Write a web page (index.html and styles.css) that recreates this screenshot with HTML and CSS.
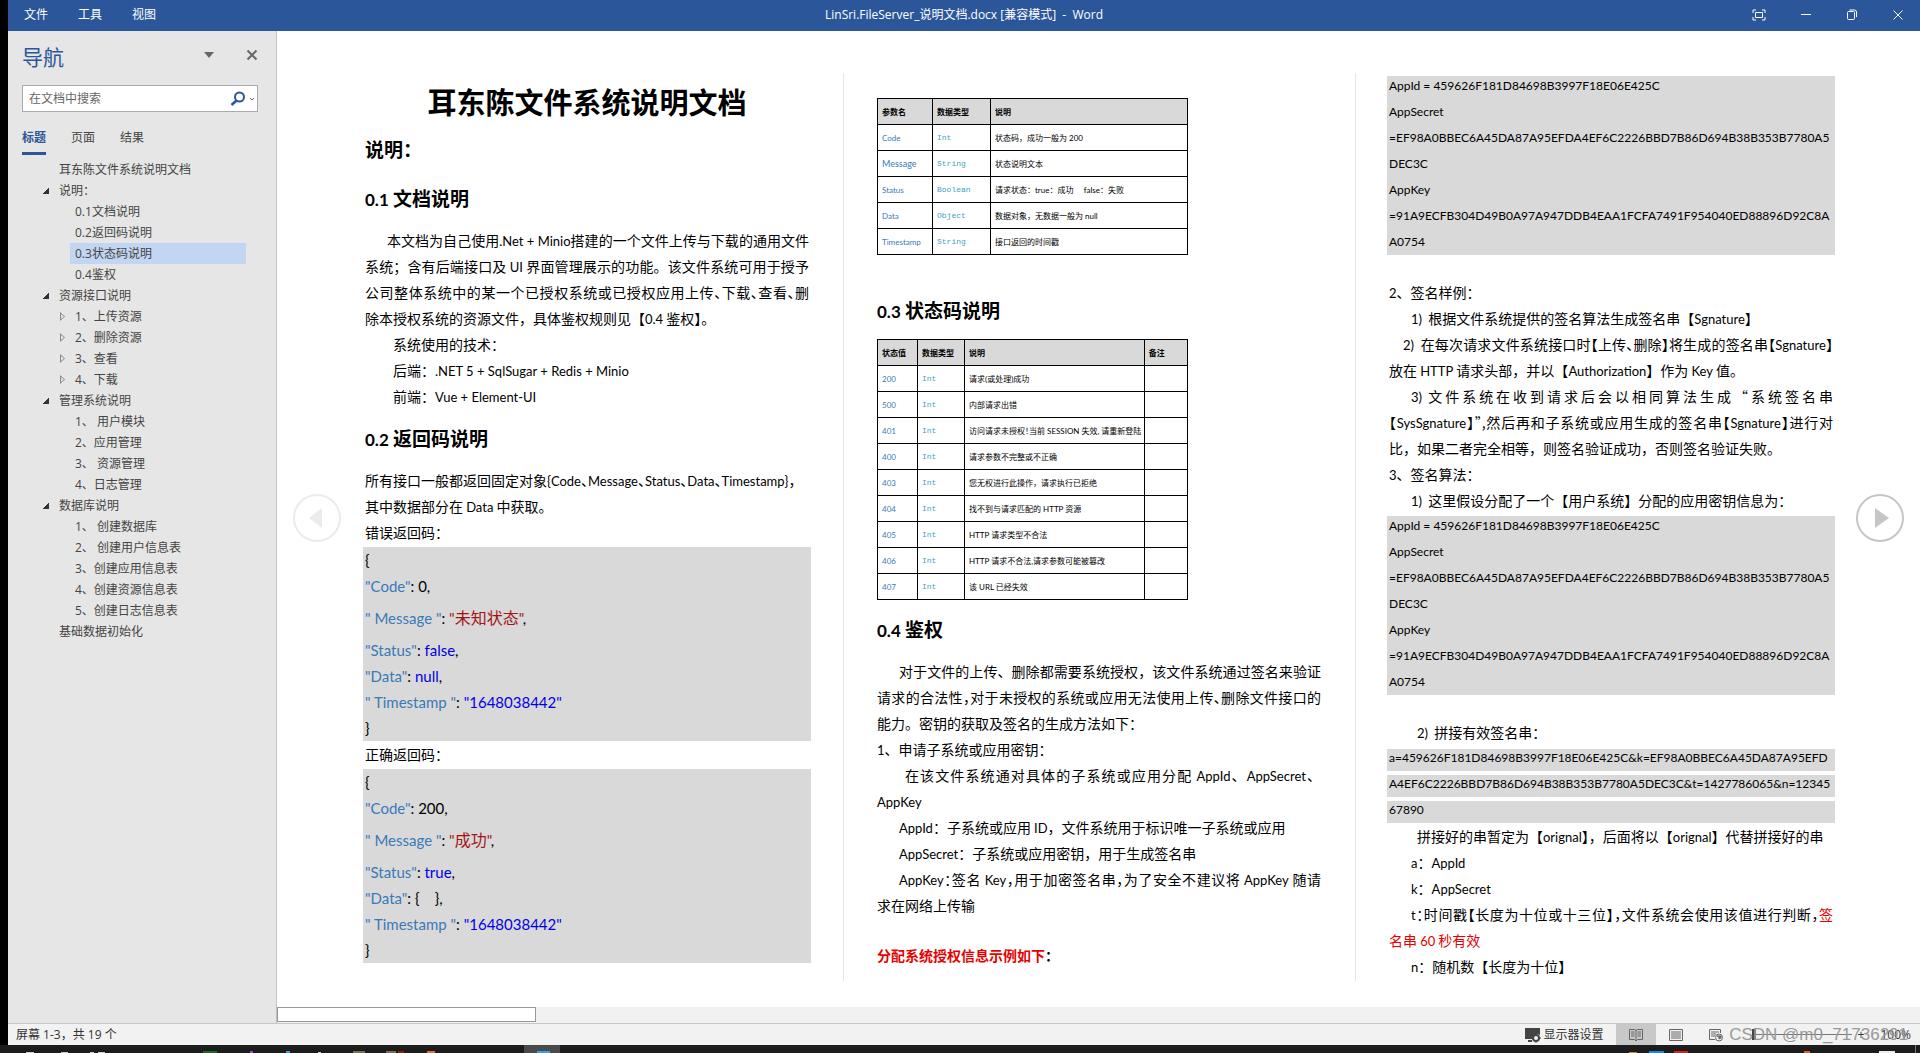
FILE: index.html
```html
<!DOCTYPE html>
<html lang="zh-CN">
<head>
<meta charset="utf-8">
<title>LinSri.FileServer_说明文档.docx - Word</title>
<link rel="stylesheet" href="styles.css">
</head>
<body>
<div class="window">
  <header class="titlebar">
    <nav class="menu">
      <button type="button">文件</button>
      <button type="button">工具</button>
      <button type="button">视图</button>
    </nav>
    <div class="doc-name">LinSri.FileServer_说明文档.docx [兼容模式] &nbsp;-&nbsp; Word</div>
    <div class="controls">
      <button type="button" aria-label="全屏"><svg width="14" height="12" viewBox="0 0 14 12"><path d="M1 4V1h3M10 1h3v3M13 8v3h-3M4 11H1V8M3.500 3.500h7v5h-7z"/></svg></button>
      <button type="button" aria-label="最小化"><svg width="12" height="12" viewBox="0 0 12 12"><path d="M1 5.500h10"/></svg></button>
      <button type="button" aria-label="还原"><svg width="12" height="12" viewBox="0 0 12 12"><path d="M1.500 3.500q0-1 1-1h5q1 0 1 1v6q0 1-1 1h-5q-1 0-1-1zM3.500 1h5q2 0 2 2v5"/></svg></button>
      <button type="button" aria-label="关闭"><svg width="12" height="12" viewBox="0 0 12 12"><path d="M1.500 1.500l9 9M10.500 1.500l-9 9"/></svg></button>
    </div>
  </header>

  <main class="workspace">
    <aside class="pane">
      <div class="pane-head">
        <h2>导航</h2>
        <button type="button" aria-label="窗格选项"><svg width="10" height="6" viewBox="0 0 10 6"><path d="M0 0h10L5 6z" fill="#666"/></svg></button>
        <button type="button" aria-label="关闭窗格"><svg width="12" height="12" viewBox="0 0 12 12"><path d="M1.500 1.500l9 9M10.500 1.500l-9 9" stroke="#666" stroke-width="2" fill="none"/></svg></button>
      </div>
      <div class="search">
        <input type="text" placeholder="在文档中搜索" aria-label="在文档中搜索">
        <svg width="26" height="16" viewBox="0 0 26 16" fill="none"><circle cx="9.500" cy="6" r="4.500" stroke="#2b579a" stroke-width="2"/><path d="M6.500 9.500L1.500 14" stroke="#2b579a" stroke-width="2.500"/><path d="M20 7l2 2 2-2" stroke="#666"/></svg>
      </div>
      <div class="tabs">
        <button type="button" class="active">标题</button>
        <button type="button">页面</button>
        <button type="button">结果</button>
      </div>
      <ul class="tree">
        <li>耳东陈文件系统说明文档</li>
        <li class="open">说明：</li>
        <li class="sub">0.1文档说明</li>
        <li class="sub">0.2返回码说明</li>
        <li class="sub current">0.3状态码说明</li>
        <li class="sub">0.4鉴权</li>
        <li class="open">资源接口说明</li>
        <li class="sub closed">1、上传资源</li>
        <li class="sub closed">2、删除资源</li>
        <li class="sub closed">3、查看</li>
        <li class="sub closed">4、下载</li>
        <li class="open">管理系统说明</li>
        <li class="sub">1、 用户模块</li>
        <li class="sub">2、应用管理</li>
        <li class="sub">3、 资源管理</li>
        <li class="sub">4、日志管理</li>
        <li class="open">数据库说明</li>
        <li class="sub">1、 创建数据库</li>
        <li class="sub">2、 创建用户信息表</li>
        <li class="sub">3、创建应用信息表</li>
        <li class="sub">4、创建资源信息表</li>
        <li class="sub">5、创建日志信息表</li>
        <li>基础数据初始化</li>
      </ul>
    </aside>

    <section class="reader">
      <div class="pages">
        <article class="page">
          <h1>耳东陈文件系统说明文档</h1>
          <h2 class="lead">说明：</h2>
          <h3><span class="en">0.1</span> 文档说明</h3>
          <p>
            <span class="fill in-m">本文档为自己使用<span class="en">.Net + Minio</span>搭建的一个文件上传与下载的通用文件</span>
            <span class="fill">系统；含有后端接口及 <span class="en">UI</span> 界面管理展示的功能。该文件系统可用于授予</span>
            <span class="fill half">公司整体系统中的某一个已授权系统或已授权应用上传、下载、查看、删</span>
            <span class="row">除本授权系统的资源文件，具体鉴权规则见【<span class="en">0.4</span> 鉴权】。</span>
          </p>
          <p class="in-l">系统使用的技术：</p>
          <p class="in-l">后端：<span class="en">.NET 5 + SqlSugar + Redis + Minio</span></p>
          <p class="in-l">前端：<span class="en">Vue + Element-UI</span></p>
          <h3><span class="en">0.2</span> 返回码说明</h3>
          <p>
            <span class="row half">所有接口一般都返回固定对象<span class="en">{Code</span>、<span class="en">Message</span>、<span class="en">Status</span>、<span class="en">Data</span>、<span class="en">Timestamp}</span>，</span>
            <span class="row">其中数据部分在 <span class="en">Data</span> 中获取。</span>
          </p>
          <p>错误返回码：</p>
          <div class="shade json">
            <p>{</p>
            <p><b>"Code"</b>: 0,</p>
            <p class="tall"><b>" Message "</b>: <i>"<span class="han">未知状态</span>"</i>,</p>
            <p><b>"Status"</b>: <em>false</em>,</p>
            <p><b>"Data"</b>: <em>null</em>,</p>
            <p><b>" Timestamp "</b>: <em>"1648038442"</em></p>
            <p>}</p>
          </div>
          <p>正确返回码：</p>
          <div class="shade json">
            <p>{</p>
            <p><b>"Code"</b>: 200,</p>
            <p class="tall"><b>" Message "</b>: <i>"<span class="han">成功</span>"</i>,</p>
            <p><b>"Status"</b>: <em>true</em>,</p>
            <p><b>"Data"</b>: {&nbsp;&nbsp;&nbsp; },</p>
            <p><b>" Timestamp "</b>: <em>"1648038442"</em></p>
            <p>}</p>
          </div>
        </article>

        <article class="page">
          <table class="params">
            <colgroup><col class="c-name"><col class="c-type"><col></colgroup>
            <thead><tr><th>参数名</th><th>数据类型</th><th>说明</th></tr></thead>
            <tbody>
              <tr><td>Code</td><td>Int</td><td>状态码，成功一般为 200</td></tr>
              <tr><td class="big">Message</td><td>String</td><td>状态说明文本</td></tr>
              <tr><td>Status</td><td>Boolean</td><td>请求状态：true：成功&nbsp;&nbsp;&nbsp;&nbsp; false：失败</td></tr>
              <tr><td>Data</td><td>Object</td><td>数据对象，无数据一般为 null</td></tr>
              <tr><td>Timestamp</td><td>String</td><td>接口返回的时间戳</td></tr>
            </tbody>
          </table>
          <h3><span class="en">0.3</span> 状态码说明</h3>
          <table>
            <colgroup><col class="c-code"><col class="c-kind"><col><col class="c-note"></colgroup>
            <thead><tr><th>状态值</th><th>数据类型</th><th>说明</th><th>备注</th></tr></thead>
            <tbody>
              <tr><td>200</td><td>Int</td><td>请求(或处理)成功</td><td></td></tr>
              <tr><td>500</td><td>Int</td><td>内部请求出错</td><td></td></tr>
              <tr><td>401</td><td>Int</td><td class="half">访问请求未授权！当前 SESSION 失效, 请重新登陆</td><td></td></tr>
              <tr><td>400</td><td>Int</td><td>请求参数不完整或不正确</td><td></td></tr>
              <tr><td>403</td><td>Int</td><td>您无权进行此操作，请求执行已拒绝</td><td></td></tr>
              <tr><td>404</td><td>Int</td><td>找不到与请求匹配的 HTTP 资源</td><td></td></tr>
              <tr><td>405</td><td>Int</td><td>HTTP 请求类型不合法</td><td></td></tr>
              <tr><td>406</td><td>Int</td><td>HTTP 请求不合法,请求参数可能被篡改</td><td></td></tr>
              <tr><td>407</td><td>Int</td><td>该 URL 已经失效</td><td></td></tr>
            </tbody>
          </table>
          <h3><span class="en">0.4</span> 鉴权</h3>
          <p>
            <span class="fill in-m">对于文件的上传、删除都需要系统授权，该文件系统通过签名来验证</span>
            <span class="fill half">请求的合法性，对于未授权的系统或应用无法使用上传、删除文件接口的</span>
            <span class="row">能力。密钥的获取及签名的生成方法如下：</span>
          </p>
          <p><span class="en">1</span>、申请子系统或应用密钥：</p>
          <p>
            <span class="fill in-l">在该文件系统通对具体的子系统或应用分配 <span class="en">AppId</span>、<span class="en">AppSecret</span>、</span>
            <span class="row"><span class="en">AppKey</span></span>
          </p>
          <p class="in-m"><span class="en">AppId</span>：子系统或应用 <span class="en">ID</span>，文件系统用于标识唯一子系统或应用</p>
          <p class="in-m"><span class="en">AppSecret</span>：子系统或应用密钥，用于生成签名串</p>
          <p>
            <span class="fill half in-m"><span class="en">AppKey</span>：签名 <span class="en">Key</span>，用于加密签名串，为了安全不建议将 <span class="en">AppKey</span> 随请</span>
            <span class="row">求在网络上传输</span>
          </p>
          <p class="spaced strong"><span class="red">分配系统授权信息示例如下</span>：</p>
        </article>

        <article class="page">
          <div class="shade keys">
            <p>AppId = 459626F181D84698B3997F18E06E425C</p>
            <p>AppSecret<br>=EF98A0BBEC6A45DA87A95EFDA4EF6C2226BBD7B86D694B38B353B7780A5<br>DEC3C</p>
            <p>AppKey<br>=91A9ECFB304D49B0A97A947DDB4EAA1FCFA7491F954040ED88896D92C8A<br>A0754</p>
          </div>
          <p class="spaced"><span class="en">2</span>、签名样例：</p>
          <p class="in-m"><span class="en">1)</span>&nbsp; 根据文件系统提供的签名算法生成签名串【<span class="en">Sgnature</span>】</p>
          <p>
            <span class="fill half in-s"><span class="en">2)</span>&nbsp; 在每次请求文件系统接口时【上传、删除】将生成的签名串【<span class="en">Sgnature</span>】</span>
            <span class="row">放在 <span class="en">HTTP</span> 请求头部，并以【<span class="en">Authorization</span>】作为 <span class="en">Key</span> 值。</span>
          </p>
          <p>
            <span class="fill in-m"><span class="en">3)</span> 文件系统在收到请求后会以相同算法生成“系统签名串</span>
            <span class="fill half">【<span class="en">SysSgnature</span>】”,然后再和子系统或应用生成的签名串【<span class="en">Sgnature</span>】进行对</span>
            <span class="row">比，如果二者完全相等，则签名验证成功，否则签名验证失败。</span>
          </p>
          <p><span class="en">3</span>、签名算法：</p>
          <p class="in-m"><span class="en">1)</span>&nbsp; 这里假设分配了一个【用户系统】分配的应用密钥信息为：</p>
          <div class="shade keys">
            <p>AppId = 459626F181D84698B3997F18E06E425C</p>
            <p>AppSecret<br>=EF98A0BBEC6A45DA87A95EFDA4EF6C2226BBD7B86D694B38B353B7780A5<br>DEC3C</p>
            <p>AppKey<br>=91A9ECFB304D49B0A97A947DDB4EAA1FCFA7491F954040ED88896D92C8A<br>A0754</p>
          </div>
          <p class="spaced in-l"><span class="en">2)</span>&nbsp; 拼接有效签名串：</p>
          <div class="shade striped">
            <p>a=459626F181D84698B3997F18E06E425C&amp;k=EF98A0BBEC6A45DA87A95EFD<br>A4EF6C2226BBD7B86D694B38B353B7780A5DEC3C&amp;t=1427786065&amp;n=12345<br>67890</p>
          </div>
          <p class="in-l">拼接好的串暂定为【<span class="en">orignal</span>】，后面将以【<span class="en">orignal</span>】代替拼接好的串</p>
          <p class="in-m"><span class="en">a</span>：<span class="en">AppId</span></p>
          <p class="in-m"><span class="en">k</span>：<span class="en">AppSecret</span></p>
          <p>
            <span class="fill half in-m"><span class="en">t</span>：时间戳【长度为十位或十三位】，文件系统会使用该值进行判断，<span class="red">签</span></span>
            <span class="row red">名串 <span class="en">60</span> 秒有效</span>
          </p>
          <p class="in-m"><span class="en">n</span>：随机数【长度为十位】</p>
        </article>
      </div>
      <button type="button" class="turn prev" aria-label="上一屏"><svg width="50" height="50" viewBox="0 0 50 50"><circle cx="25" cy="25" r="23"/><path d="M17 25l13-10v20z"/></svg></button>
      <button type="button" class="turn next" aria-label="下一屏"><svg width="50" height="50" viewBox="0 0 50 50"><circle cx="25" cy="25" r="23"/><path d="M34 25L20 15v20z"/></svg></button>
      <div class="scroll"><div class="thumb"></div></div>
    </section>
  </main>

  <footer class="status">
    <span class="count">屏幕 1-3，共 19 个</span>
    <button type="button" class="display"><svg width="16" height="16" viewBox="0 0 16 16"><path d="M0 1h15v7l-3-1-4 3-1 2H0zM3 13h4v2H3z" fill="#444"/><circle cx="11" cy="11" r="3" fill="none" stroke="#444" stroke-width="2"/><path d="M11 6v2M11 14v2M6 11h2M14 11h2M8 8l1 1M13 13l1 1M14 8l-1 1M8 14l1-1" stroke="#444"/></svg>显示器设置</button>
    <button type="button" class="view on" aria-label="阅读视图"><svg width="14" height="14" viewBox="0 0 14 14"><path d="M7 2.500L5.500 1.500h-5v10h5L7 13l1.500-1.500h5v-10h-5zM7 2v11M2 4h3.500M2 6h3.500M2 8h3.500M8.500 4H12M8.500 6H12M8.500 8H12"/></svg></button>
    <button type="button" class="view" aria-label="页面视图"><svg width="14" height="14" viewBox="0 0 14 14"><path d="M.5 1.500h13v11H.5zM2 4h10M2 6h10M2 8h10M2 10h10"/></svg></button>
    <button type="button" class="view" aria-label="Web 版式"><svg width="14" height="14" viewBox="0 0 14 14"><path d="M6 11.500H.5v-10h11V5M2 4h8M2 6h5M2 8h4"/><circle cx="10" cy="9.500" r="3.500"/><path d="M8 8l2 1v2l2-1V8z" fill="#666"/></svg></button>
    <div class="zoom">
      <input type="range" min="10" max="500" value="10" aria-label="显示比例">
      <span>+</span>
    </div>
    <span class="percent">100%</span>
    <span class="watermark">CSDN @m0_71736291</span>
  </footer>
</div>
<div class="taskbar">
  <svg width="580" height="8" viewBox="0 0 580 8"><path d="M524 0h36v8h-36z" fill="#4a4a4a"/><path d="M537 6h13v2h-13z" fill="#3aa0e8"/><path d="M26 7h8v1h-8zM61 7h7v1h-7zM90 7h4v1h-4zM98 7h7v1h-7zM318 7h3v1h-3z" fill="#ccc"/><path d="M203 6h14v2h-14z" fill="#1d6b22"/><path d="M250 6h3v2h-3z" fill="#8a4fe0"/><path d="M286 6h4v2h-4z" fill="#2aa7e8"/><path d="M353 6h12v2h-12zM386 6h10v2h-10z" fill="#777058"/><path d="M398 6h6v2h-6z" fill="#8a1d14"/><path d="M427 6h8v2h-8z" fill="#e86a3a"/></svg>
  <svg width="320" height="8" viewBox="0 0 320 8"><path d="M29 7h8v1h-8z" fill="#c28a2e"/><path d="M49 6h15v2H49z" fill="#1f86d8"/><path d="M74 6h14v2H74z" fill="#d8201f"/><path d="M204 6h6v2h-6z" fill="#e85a20"/><path d="M279 6h16v2h-16z" fill="#eee"/><path d="M315 0h1v8h-1z" fill="#777"/></svg>
</div>
</body>
</html>
```
FILE: styles.css
```css
* { box-sizing: border-box; }

body {
  margin: 0;
  min-height: 100vh;
  display: flex;
  flex-direction: column;
  background: #000;
  color: #000;
  font: 12px/20px "Open Sans", "Noto Sans CJK SC", sans-serif;
}

h1, h2, h3, p, ul { margin: 0; padding: 0; }
button { margin: 0; padding: 0; border: 0; background: none; color: inherit; font: inherit; }
svg { display: block; flex: none; }

.window {
  flex: 1;
  display: flex;
  flex-direction: column;
  margin-left: 8px;
  background: #fff;
}

/* title bar */
.titlebar {
  display: grid;
  grid-template-columns: 1fr auto 1fr;
  align-items: center;
  height: 31px;
  padding: 0 16px 1px;
  background: #2b579a;
  color: #fff;
}
.menu { display: flex; gap: 30px; }
.controls { display: flex; justify-content: flex-end; gap: 34px; }
.controls svg { fill: none; stroke: #fff; }

/* navigation pane */
.workspace { flex: 1; display: flex; }
.pane {
  width: 269px;
  flex: none;
  padding: 10px 18px 0 14px;
  background: #e6e6e6;
  border-right: 1px solid #c0c0c0;
  color: #444;
}
.pane-head { display: flex; align-items: center; height: 32px; gap: 32px; }
.pane-head h2 { flex: 1; font-size: 21px; line-height: 32px; font-weight: 400; color: #2b579a; }
.pane-head button { padding-bottom: 5px; }
.search {
  display: flex;
  align-items: center;
  height: 27px;
  margin-top: 12px;
  padding: 0 1px 0 6px;
  border: 1px solid #ababab;
  background: #fff;
}
.search input {
  flex: 1;
  min-width: 0;
  padding: 0;
  border: 0;
  outline: 0;
  background: none;
  font: inherit;
}
.search input::placeholder { color: #666; }
.tabs { display: flex; gap: 25px; height: 47px; padding-top: 13px; }
.tabs button { height: 30px; padding-bottom: 2px; border-bottom: 3px solid transparent; }
.tabs .active { color: #2b579a; border-color: #2b579a; font-weight: 700; }
.tree { list-style: none; line-height: 21px; }
.tree li { display: flex; align-items: center; padding-left: 37px; margin-right: 12px; white-space: pre; }
.tree .sub { padding-left: 5px; margin-left: 48px; }
.tree .current { background: #c2d5f2; }
.tree .open::before {
  content: "";
  width: 6px;
  height: 6px;
  margin: 0 10px 0 -16px;
  background: linear-gradient(135deg, transparent 50%, #333 50%);
}
.tree .closed::before {
  content: "";
  width: 5px;
  height: 9px;
  margin: 0 10px 0 -15px;
  background: #888;
  clip-path: polygon(0 0, 100% 50%, 0 100%, 0 0, 1px 2px, 1px 7px, 4px 50%, 1px 2px);
}

/* reading area */
.reader {
  position: relative;
  flex: 1;
  min-width: 0;
  display: flex;
  flex-direction: column;
}
.pages {
  flex: 1;
  display: grid;
  grid-template-columns: repeat(3, minmax(0, 1fr));
  padding: 42px 53px 26px 54px;
}
.page {
  padding: 0 34px;
  font: 14px/26px "Noto Sans CJK SC", sans-serif;
  white-space: nowrap;
}
.page + .page { padding-left: 33px; border-left: 1px solid #e4e4e4; }
.en { font-family: Lato, "Noto Sans CJK SC", sans-serif; font-size: 13px; line-height: 1; }
.page h1 { font-size: 29px; line-height: 56px; text-align: center; font-weight: 700; }
.page .lead { font-size: 19px; line-height: 40px; }
.page h3 { font-size: 19px; line-height: 58px; }
.page h3 .en { font-size: 17px; }
.row, .fill { display: block; }
.fill { text-align: justify; text-align-last: justify; }
.half { font-feature-settings: "halt"; }
.in-s { padding-left: 14px; }
.in-m { padding-left: 22px; }
.in-l { padding-left: 28px; }
.spaced { margin-top: 24px; }
.strong { font-weight: 700; }
.red { color: #e80000; }

.shade { margin: 0 -2px; padding: 0 2px; background: #d9d9d9; font-family: Lato, sans-serif; }
.json { margin-top: 2px; font-size: 15px; }
.json .tall { line-height: 38px; }
.json b { font-weight: 400; color: #3a7ab8; }
.json i { font-style: normal; color: #a31515; }
.json em { font-style: normal; color: #0000e6; }
.json .han { font: 16px/1 "Noto Sans CJK SC", sans-serif; }
.keys { font-size: 12px; background: linear-gradient(transparent 3px, #d9d9d9 3px); }
.striped { font-size: 12px; background: repeating-linear-gradient(transparent 0 4px, #d9d9d9 4px 26px); }

/* data tables */
table {
  width: 70%;
  border-collapse: collapse;
  table-layout: fixed;
  font: 8px/12px Lato, "Noto Sans CJK SC", sans-serif;
}
.params { margin: 25px 0 26px; }
th, td { height: 26px; padding: 0 0 0 4px; border: 1px solid #000; text-align: left; }
th { background: #d9d9d9; }
td:first-child { color: #3a7ab8; }
td:nth-child(2) { color: #3f9fc0; font-family: "Liberation Mono", monospace; }
td.big { font-size: 9px; }
.c-name { width: 55px; }
.c-type { width: 58px; }
.c-code { width: 40px; }
.c-kind { width: 47px; }
.c-note { width: 43px; }

/* page-turn buttons float over the pages */
.turn { position: absolute; top: 462px; }
.turn svg { fill: none; stroke-width: 2; }
.prev { left: 15px; stroke: #ebebeb; }
.next { right: 15px; stroke: #c6c6c6; }
.prev path { fill: #ebebeb; stroke: none; }
.next path { fill: #c6c6c6; stroke: none; }

.scroll { height: 16px; background: #f1f1f1; }
.thumb { width: 259px; height: 15px; border: 1px solid #999; background: #fff; }

/* status bar */
.status {
  position: relative;
  display: flex;
  align-items: center;
  height: 22px;
  padding: 0 9px 0 8px;
  background: #f2f2f2;
  border-top: 1px solid #c8c8c8;
  color: #333;
}
.count { flex: 1; }
.display { display: flex; align-items: center; gap: 3px; margin-right: 12px; }
.view { width: 40px; height: 21px; display: grid; place-items: center; }
.view svg { fill: none; stroke: #666; }
.on { background: #c8c8c8; }
.zoom { display: flex; align-items: center; gap: 6px; margin: 0 16px 0 16px; }
.zoom input {
  appearance: none;
  width: 100px;
  height: 16px;
  margin: 0;
  background: linear-gradient(#777, #777) center / 100% 1px no-repeat;
}
.zoom input::-webkit-slider-thumb { appearance: none; width: 4px; height: 11px; background: #444; }
.watermark {
  position: absolute;
  right: 12px;
  top: 1px;
  font: 17px/20px "Liberation Sans", sans-serif;
  color: #999;
}

.taskbar { display: flex; justify-content: space-between; height: 8px; background: #1c1c1c; }
```
